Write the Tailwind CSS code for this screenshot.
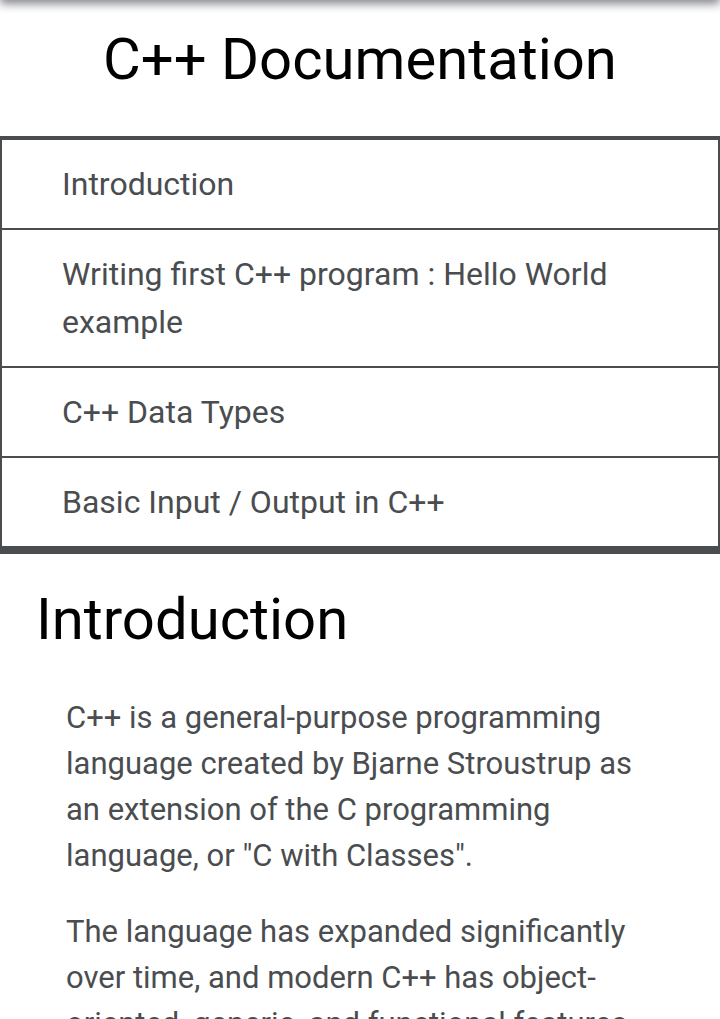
<!DOCTYPE html>
<html lang="en">
<head>
<meta charset="utf-8">
<meta name="viewport" content="width=device-width, initial-scale=1">
<title>C++ Documentation</title>
<script src="https://cdn.jsdelivr.net/npm/@tailwindcss/browser@4"></script>
</head>
<body class="bg-white font-[Roboto,sans-serif] text-[#4a4d50]">
<div class="-mt-5 h-5 shadow-[0_4px_10px_0_#86888d]"></div>
<nav>
<h1 class="pt-[23px] pb-[41px] text-center text-[58px] leading-[72px] text-black">C++ Documentation</h1>
<ul class="border-x-2 border-t-4 border-b-8 border-[#4a4d50] text-[32px] leading-[48px]">
<li><a href="#introduction" class="block py-5 pr-10 pl-[60px]">Introduction</a></li>
<li class="border-t-2 border-[#4a4d50]"><a href="#hello" class="block py-5 pr-10 pl-[60px]">Writing first C++ program : Hello World example</a></li>
<li class="border-t-2 border-[#4a4d50]"><a href="#types" class="block py-5 pr-10 pl-[60px]">C++ Data Types</a></li>
<li class="border-t-2 border-[#4a4d50]"><a href="#io" class="block py-5 pr-10 pl-[60px]">Basic Input / Output in C++</a></li>
</ul>
</nav>
<main>
<section id="introduction">
<h2 class="px-9 pt-7 text-[58px] leading-[74px] text-black">Introduction</h2>
<div class="flex flex-col gap-[30px] pt-[39px] pr-[84px] pl-[66px] text-[31px] leading-[46px]">
<p>C++ is a general-purpose programming language created by Bjarne Stroustrup as an extension of the C programming language, or "C with Classes".</p>
<p>The language has expanded significantly over time, and modern C++ has object-oriented, generic, and functional features</p>
</div>
</section>
</main>
</body>
</html>
